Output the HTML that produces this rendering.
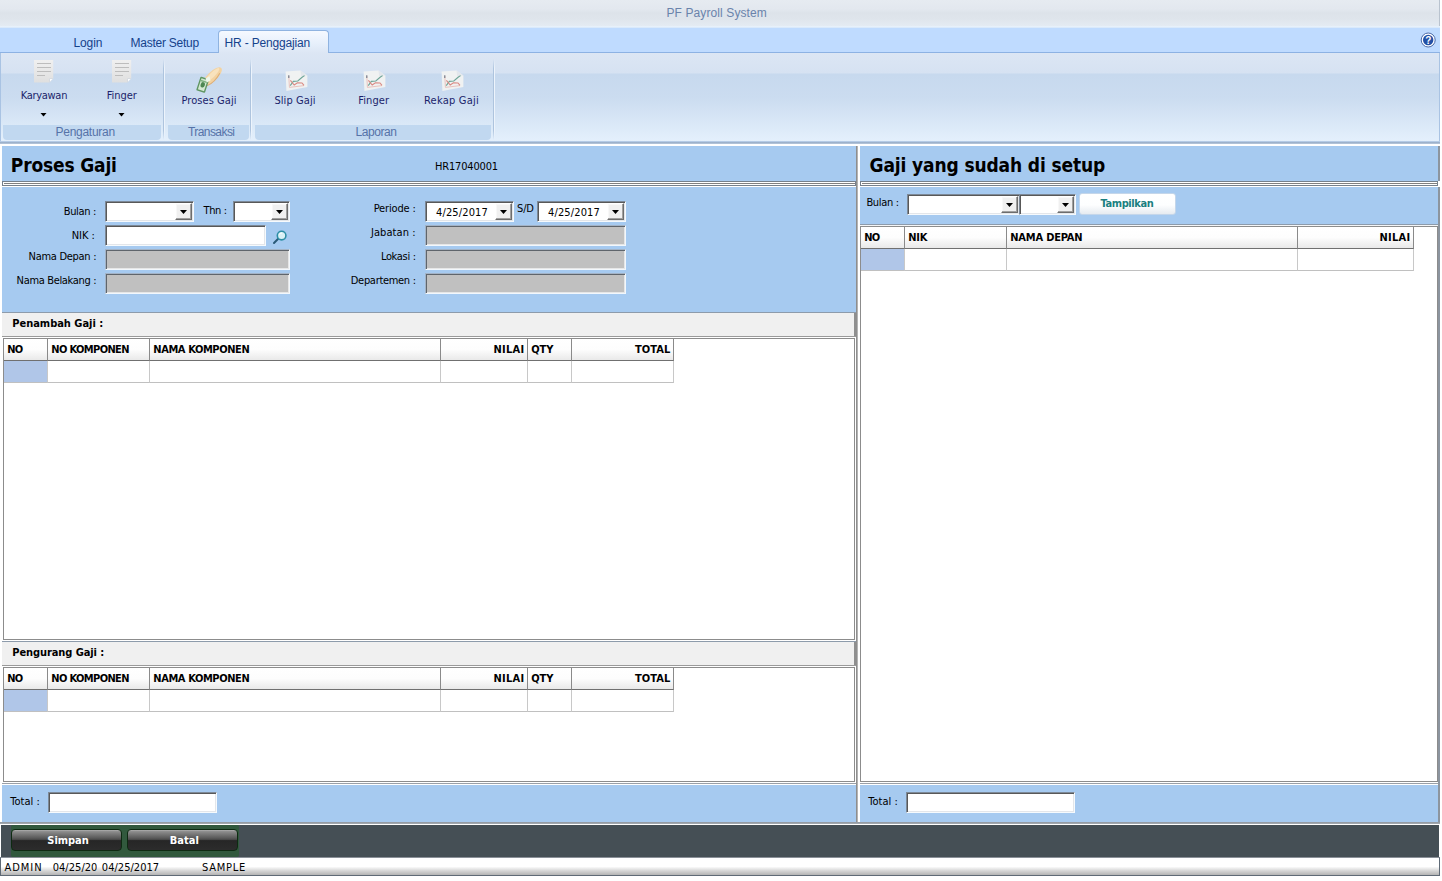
<!DOCTYPE html>
<html lang="id">
<head>
<meta charset="utf-8">
<title>PF Payroll System</title>
<style>
*{box-sizing:border-box;margin:0;padding:0}
html,body{width:1442px;height:881px;overflow:hidden;background:#fff}
body{position:relative;font-family:"Liberation Sans","DejaVu Sans",sans-serif;font-size:11px;color:#000}
#app{position:absolute;left:0;top:0;width:1442px;height:881px;overflow:hidden}
#app div,#app span,#app svg{position:absolute}
.t{white-space:nowrap}
.inp{background:#fff;border:1px solid;border-color:#7d8997 #f6fafd #f6fafd #7d8997;box-shadow:inset 1px 1px 0 #585858,inset -1px -1px 0 #e3e6ea}
.dis{background:#c0c0c0;border:1px solid;border-color:#a3b3c6 #f2f7fc #f2f7fc #a3b3c6;box-shadow:inset 1px 1px 0 #5f656c,inset -1px -1px 0 #e6e6e6}
.ddb{background:#f0f0f0;border:1px solid;border-color:#fff #6d6d6d #6d6d6d #fff;box-shadow:inset -1px -1px 0 #a0a0a0,inset 1px 1px 0 #f8f8f8}
.ddb i{position:absolute;left:4px;top:6px;width:7px;height:4px;background:#000;clip-path:polygon(0 0,100% 0,50% 100%)}
.gh{background:linear-gradient(#fff 0,#fdfdfd 50%,#e9e9e9 100%);border-right:1px solid #8a8a8a;border-bottom:1px solid #707070}
.gc{background:#fff;border-right:1px solid #c8c8c8;border-bottom:1px solid #c0c0c0}
.btn{border-radius:4px;border:1px solid #0e2a12;background:linear-gradient(#b0b0b0 0,#8c8c8c 8%,#5a5a5a 40%,#484848 48%,#262626 53%,#2c2c2c 100%)}
</style>
</head>
<body>
<div id="app">
<div style="left:0px;top:0px;width:1440px;height:26px;background:linear-gradient(#e6ebf1 0,#e3e8ef 9px,#dde3ea 13px,#dfe5ec 19px,#e4ebf3 26px)"></div>
<div style="left:0px;top:26px;width:1440px;height:2px;background:linear-gradient(#edf4fb,#d4e6fb)"></div>
<div style="left:1439px;top:0px;width:1px;height:26px;background:#b9c3cf"></div>
<div style="left:0px;top:28px;width:1440px;height:24px;background:#bfdbff"></div>
<div style="left:0px;top:52px;width:1440px;height:1px;background:#8db2e3"></div>
<div style="left:0px;top:53px;width:1440px;height:89px;background:linear-gradient(#dce6f4 0,#d6e2f2 20px,#c7d9ee 21px,#cbdcf0 45px,#e4f0fc 88px)"></div>
<div style="left:0px;top:53px;width:1px;height:89px;background:#a9c3e3"></div>
<div style="left:1439px;top:53px;width:1px;height:89px;background:#a9c3e3"></div>
<div style="left:0px;top:141px;width:1440px;height:1px;background:#b5cbe6"></div>
<div style="left:0px;top:142px;width:1440px;height:2px;background:linear-gradient(#93aac6,#b9c9dc)"></div>
<div style="left:218px;top:30px;width:111px;height:23px;border:1px solid #8fb3e0;border-bottom:none;border-radius:4px 4px 0 0;background:linear-gradient(#f5f9ff 0,#e6effb 60%,#dce6f4 100%)"></div>
<svg style="left:1420px;top:32px" width="16" height="16" viewBox="0 0 16 16"><circle cx="8.2" cy="8" r="7" fill="#fff" stroke="#4a6aa8" stroke-width="1"/><circle cx="8.2" cy="8" r="5.2" fill="#2350a5"/><text x="8.2" y="11.6" text-anchor="middle" font-family="Liberation Sans,sans-serif" font-weight="bold" font-size="10" fill="#fff">?</text></svg>
<div style="left:3px;top:125px;width:158px;height:15px;background:#c1d8f0;border-radius:0 0 4px 4px"></div>
<div style="left:163px;top:59px;width:1px;height:81px;background:linear-gradient(rgba(160,186,216,0) 0,#aec4de 12%,#aec4de 88%,rgba(160,186,216,0) 100%)"></div>
<div style="left:164px;top:59px;width:1px;height:81px;background:linear-gradient(rgba(255,255,255,0) 0,#edf4fc 12%,#edf4fc 88%,rgba(255,255,255,0) 100%)"></div>
<div style="left:168px;top:125px;width:81px;height:15px;background:#c1d8f0;border-radius:0 0 4px 4px"></div>
<div style="left:250px;top:59px;width:1px;height:81px;background:linear-gradient(rgba(160,186,216,0) 0,#aec4de 12%,#aec4de 88%,rgba(160,186,216,0) 100%)"></div>
<div style="left:251px;top:59px;width:1px;height:81px;background:linear-gradient(rgba(255,255,255,0) 0,#edf4fc 12%,#edf4fc 88%,rgba(255,255,255,0) 100%)"></div>
<div style="left:255px;top:125px;width:236px;height:15px;background:#c1d8f0;border-radius:0 0 4px 4px"></div>
<div style="left:493px;top:59px;width:1px;height:81px;background:linear-gradient(rgba(160,186,216,0) 0,#aec4de 12%,#aec4de 88%,rgba(160,186,216,0) 100%)"></div>
<div style="left:494px;top:59px;width:1px;height:81px;background:linear-gradient(rgba(255,255,255,0) 0,#edf4fc 12%,#edf4fc 88%,rgba(255,255,255,0) 100%)"></div>
<svg style="left:34px;top:60px" width="20" height="23" viewBox="0 0 20 23"><defs><linearGradient id="pg34" x1="0" y1="0" x2="0" y2="1"><stop offset="0" stop-color="#f0f0f0"/><stop offset="1" stop-color="#dfdfdf"/></linearGradient></defs><path d="M0 0H19.2V18.5L15.5 22.6H0Z" fill="url(#pg34)"/><path d="M15.5 22.6V18.5H19.2Z" fill="#c9d3e0"/><path d="M16 19H18.6L16 21.8Z" fill="#fbfcfd"/><g fill="#bdbdbd" shape-rendering="crispEdges"><rect x="3" y="3" width="14" height="1"/><rect x="3" y="7" width="14" height="1"/><rect x="3" y="11" width="14" height="1"/><rect x="3" y="15" width="8" height="1"/></g></svg>
<svg style="left:112px;top:60px" width="20" height="23" viewBox="0 0 20 23"><defs><linearGradient id="pg112" x1="0" y1="0" x2="0" y2="1"><stop offset="0" stop-color="#f0f0f0"/><stop offset="1" stop-color="#dfdfdf"/></linearGradient></defs><path d="M0 0H19.2V18.5L15.5 22.6H0Z" fill="url(#pg112)"/><path d="M15.5 22.6V18.5H19.2Z" fill="#c9d3e0"/><path d="M16 19H18.6L16 21.8Z" fill="#fbfcfd"/><g fill="#bdbdbd" shape-rendering="crispEdges"><rect x="3" y="3" width="14" height="1"/><rect x="3" y="7" width="14" height="1"/><rect x="3" y="11" width="14" height="1"/><rect x="3" y="15" width="8" height="1"/></g></svg>
<svg style="left:40px;top:113px" width="7" height="4" viewBox="0 0 7 4"><path d="M0.5 0H6.5L3.5 3.6Z" fill="#000"/></svg>
<svg style="left:118px;top:113px" width="7" height="4" viewBox="0 0 7 4"><path d="M0.5 0H6.5L3.5 3.6Z" fill="#000"/></svg>
<svg style="left:196px;top:66px" width="27" height="27" viewBox="0 0 27 27"><g transform="rotate(-44 16.3 10.6)"><ellipse cx="16.3" cy="10.6" rx="12.4" ry="4.7" fill="#f3d2a0"/><ellipse cx="17.5" cy="9.4" rx="9.5" ry="2.4" fill="#f8e2bd"/><path d="M6 13.6 Q14 16.6 24 13.4" stroke="#dcae78" stroke-width="1" fill="none"/></g><g transform="rotate(18 6.8 18.6)"><rect x="2.2" y="11.6" width="9.2" height="14.4" rx="1" fill="#5f9662"/><rect x="3.6" y="13" width="6.4" height="11.6" fill="#d4e8d2"/><ellipse cx="6.8" cy="18.8" rx="2.1" ry="2.8" fill="#4d8752"/><rect x="3.6" y="14.6" width="6.4" height="1.4" fill="#7eb07f"/></g><path d="M9.5 12.5 L13.5 10.2 L14.5 14.5 L11 16.5Z" fill="#eef6ea"/></svg>
<svg style="left:285px;top:69.5px" width="24" height="22" viewBox="0 0 24 22"><path d="M0.6 1.6 L15.4 0.6 L22.4 5.6 L22.4 17 L1.4 21 Z" fill="#f0f2f2"/><path d="M15.4 0.6 L22.4 5.6 L16.2 6.2Z" fill="#e3e7ec"/><path d="M3.8 5.8 L4.4 17.4 L19 15.6" fill="none" stroke="#e9bdb8" stroke-width="0.9"/><path d="M3.8 5.2 V8" stroke="#6b7786" stroke-width="1.1"/><path d="M5.2 15.6 L8.4 11.4 L12.8 11 L17.4 7 L19.6 5.6" fill="none" stroke="#6ea597" stroke-width="1.1"/><path d="M5.4 10.4 L9.2 15 L12.4 12.8 L17 13 L19 15.4" fill="none" stroke="#d98982" stroke-width="1.1"/></svg>
<svg style="left:363px;top:69.5px" width="24" height="22" viewBox="0 0 24 22"><path d="M0.6 1.6 L15.4 0.6 L22.4 5.6 L22.4 17 L1.4 21 Z" fill="#f0f2f2"/><path d="M15.4 0.6 L22.4 5.6 L16.2 6.2Z" fill="#e3e7ec"/><path d="M3.8 5.8 L4.4 17.4 L19 15.6" fill="none" stroke="#e9bdb8" stroke-width="0.9"/><path d="M3.8 5.2 V8" stroke="#6b7786" stroke-width="1.1"/><path d="M5.2 15.6 L8.4 11.4 L12.8 11 L17.4 7 L19.6 5.6" fill="none" stroke="#6ea597" stroke-width="1.1"/><path d="M5.4 10.4 L9.2 15 L12.4 12.8 L17 13 L19 15.4" fill="none" stroke="#d98982" stroke-width="1.1"/></svg>
<svg style="left:441px;top:69.5px" width="24" height="22" viewBox="0 0 24 22"><path d="M0.6 1.6 L15.4 0.6 L22.4 5.6 L22.4 17 L1.4 21 Z" fill="#f0f2f2"/><path d="M15.4 0.6 L22.4 5.6 L16.2 6.2Z" fill="#e3e7ec"/><path d="M3.8 5.8 L4.4 17.4 L19 15.6" fill="none" stroke="#e9bdb8" stroke-width="0.9"/><path d="M3.8 5.2 V8" stroke="#6b7786" stroke-width="1.1"/><path d="M5.2 15.6 L8.4 11.4 L12.8 11 L17.4 7 L19.6 5.6" fill="none" stroke="#6ea597" stroke-width="1.1"/><path d="M5.4 10.4 L9.2 15 L12.4 12.8 L17 13 L19 15.4" fill="none" stroke="#d98982" stroke-width="1.1"/></svg>
<div style="left:0px;top:144px;width:1440px;height:2px;background:#fff"></div>
<div style="left:2px;top:146px;width:854px;height:35px;background:#a6caf0"></div>
<div style="left:2px;top:181px;width:854px;height:6px;background:#fff"></div>
<div style="left:2px;top:181px;width:854px;height:5px;border:1px solid #75808c"></div>
<div style="left:4px;top:183px;width:851px;height:1px;background:#808080"></div>
<div style="left:2px;top:187px;width:854px;height:125px;background:#a6caf0"></div>
<div class="inp" style="left:105px;top:201px;width:89px;height:21px;"><div class="ddb" style="right:1px;top:1px;width:17px;height:17px"><i></i></div></div>
<div class="inp" style="left:233px;top:201px;width:57px;height:21px;"><div class="ddb" style="right:1px;top:1px;width:17px;height:17px"><i></i></div></div>
<div class="inp" style="left:105px;top:225px;width:161px;height:21px;"></div>
<div class="dis" style="left:105px;top:249px;width:185px;height:21px;"></div>
<div class="dis" style="left:105px;top:273px;width:185px;height:21px;"></div>
<div class="inp" style="left:425px;top:201px;width:89px;height:21px;"><div class="ddb" style="right:1px;top:1px;width:17px;height:17px"><i></i></div></div>
<div class="inp" style="left:537px;top:201px;width:89px;height:21px;"><div class="ddb" style="right:1px;top:1px;width:17px;height:17px"><i></i></div></div>
<div class="dis" style="left:425px;top:225px;width:201px;height:21px;"></div>
<div class="dis" style="left:425px;top:249px;width:201px;height:21px;"></div>
<div class="dis" style="left:425px;top:273px;width:201px;height:21px;"></div>
<svg style="left:272px;top:230px" width="16" height="15" viewBox="0 0 16 15"><path d="M2 13 L6.2 8.8" stroke="#2a5a78" stroke-width="2" stroke-linecap="round"/><circle cx="9.6" cy="5.6" r="4.3" fill="#d9f1f6" stroke="#2e8fa6" stroke-width="1.6"/><path d="M7.3 4.6 A2.6 2.6 0 0 1 10.2 3" stroke="#fff" stroke-width="1" fill="none"/></svg>
<div style="left:2px;top:312px;width:854px;height:1px;background:#8d9bab"></div>
<div style="left:2px;top:313px;width:854px;height:23px;background:#f0f0f0"></div>
<div style="left:2px;top:336px;width:854px;height:1px;background:#9a9a9a"></div>
<div style="left:2px;top:337px;width:854px;height:303px;background:#fff"></div>
<div style="left:854px;top:313px;width:2px;height:23px;background:#8f8f8f"></div>
<div style="left:3px;top:338px;width:852px;height:302px;background:#fff;border:1px solid #8c8c8c"></div>
<div class="gh" style="left:4px;top:339px;width:44px;height:22px;"></div>
<div class="gc" style="left:4px;top:361px;width:44px;height:22px;background:#b0c6e8;"></div>
<div class="gh" style="left:48px;top:339px;width:102px;height:22px;"></div>
<div class="gc" style="left:48px;top:361px;width:102px;height:22px;"></div>
<div class="gh" style="left:150px;top:339px;width:291px;height:22px;"></div>
<div class="gc" style="left:150px;top:361px;width:291px;height:22px;"></div>
<div class="gh" style="left:441px;top:339px;width:87px;height:22px;"></div>
<div class="gc" style="left:441px;top:361px;width:87px;height:22px;"></div>
<div class="gh" style="left:528px;top:339px;width:44px;height:22px;"></div>
<div class="gc" style="left:528px;top:361px;width:44px;height:22px;"></div>
<div class="gh" style="left:572px;top:339px;width:102px;height:22px;"></div>
<div class="gc" style="left:572px;top:361px;width:102px;height:22px;"></div>
<div style="left:2px;top:640px;width:854px;height:1px;background:#fff"></div>
<div style="left:2px;top:641px;width:854px;height:1px;background:#8d9bab"></div>
<div style="left:2px;top:642px;width:854px;height:23px;background:#f0f0f0"></div>
<div style="left:2px;top:665px;width:854px;height:1px;background:#9a9a9a"></div>
<div style="left:2px;top:666px;width:854px;height:116px;background:#fff"></div>
<div style="left:854px;top:642px;width:2px;height:23px;background:#8f8f8f"></div>
<div style="left:3px;top:667px;width:852px;height:115px;background:#fff;border:1px solid #8c8c8c"></div>
<div class="gh" style="left:4px;top:668px;width:44px;height:22px;"></div>
<div class="gc" style="left:4px;top:690px;width:44px;height:22px;background:#b0c6e8;"></div>
<div class="gh" style="left:48px;top:668px;width:102px;height:22px;"></div>
<div class="gc" style="left:48px;top:690px;width:102px;height:22px;"></div>
<div class="gh" style="left:150px;top:668px;width:291px;height:22px;"></div>
<div class="gc" style="left:150px;top:690px;width:291px;height:22px;"></div>
<div class="gh" style="left:441px;top:668px;width:87px;height:22px;"></div>
<div class="gc" style="left:441px;top:690px;width:87px;height:22px;"></div>
<div class="gh" style="left:528px;top:668px;width:44px;height:22px;"></div>
<div class="gc" style="left:528px;top:690px;width:44px;height:22px;"></div>
<div class="gh" style="left:572px;top:668px;width:102px;height:22px;"></div>
<div class="gc" style="left:572px;top:690px;width:102px;height:22px;"></div>
<div style="left:2px;top:782px;width:854px;height:3px;background:#fff"></div>
<div style="left:2px;top:783px;width:854px;height:1px;background:#9aa0a8"></div>
<div style="left:2px;top:785px;width:854px;height:37px;background:#a6caf0"></div>
<div class="inp" style="left:48px;top:792px;width:169px;height:21px;"></div>
<div style="left:856px;top:146px;width:4px;height:676px;background:#fff;border-left:1px solid #8e8e8e"></div>
<div style="left:857px;top:146px;width:1px;height:676px;background:#b4b4b4"></div>
<div style="left:860px;top:146px;width:578px;height:35px;background:#a6caf0"></div>
<div style="left:860px;top:181px;width:578px;height:6px;background:#fff"></div>
<div style="left:860px;top:181px;width:578px;height:5px;border:1px solid #75808c"></div>
<div style="left:862px;top:183px;width:575px;height:1px;background:#808080"></div>
<div style="left:860px;top:187px;width:578px;height:37px;background:#a6caf0"></div>
<div style="left:860px;top:224px;width:578px;height:1px;background:#8d9bab"></div>
<div style="left:860px;top:225px;width:578px;height:1px;background:#f4f6f8"></div>
<div class="inp" style="left:907px;top:194px;width:113px;height:21px;"><div class="ddb" style="right:1px;top:1px;width:17px;height:17px"><i></i></div></div>
<div class="inp" style="left:1019px;top:194px;width:57px;height:21px;"><div class="ddb" style="right:1px;top:1px;width:17px;height:17px"><i></i></div></div>
<div style="left:1079px;top:193px;width:97px;height:22px;border-radius:3px;border:1px solid #c4d6ea;background:linear-gradient(#ffffff 0,#fdfeff 55%,#e6ebf0 100%)"></div>
<div style="left:860px;top:226px;width:578px;height:556px;background:#fff;border:1px solid #8c8c8c"></div>
<div style="left:1438px;top:146px;width:2px;height:35px;background:#8c959f"></div>
<div style="left:1438px;top:187px;width:2px;height:635px;background:#8c959f"></div>
<div class="gh" style="left:861px;top:227px;width:44px;height:22px;"></div>
<div class="gc" style="left:861px;top:249px;width:44px;height:22px;background:#b0c6e8;"></div>
<div class="gh" style="left:905px;top:227px;width:102px;height:22px;"></div>
<div class="gc" style="left:905px;top:249px;width:102px;height:22px;"></div>
<div class="gh" style="left:1007px;top:227px;width:291px;height:22px;"></div>
<div class="gc" style="left:1007px;top:249px;width:291px;height:22px;"></div>
<div class="gh" style="left:1298px;top:227px;width:116px;height:22px;"></div>
<div class="gc" style="left:1298px;top:249px;width:116px;height:22px;"></div>
<div style="left:860px;top:782px;width:578px;height:3px;background:#fff"></div>
<div style="left:860px;top:783px;width:578px;height:1px;background:#9aa0a8"></div>
<div style="left:860px;top:785px;width:578px;height:37px;background:#a6caf0"></div>
<div class="inp" style="left:906px;top:792px;width:169px;height:21px;"></div>
<div style="left:0px;top:822px;width:1440px;height:2px;background:linear-gradient(#8f979f,#a8aeb4)"></div>
<div style="left:0px;top:824px;width:1440px;height:1px;background:#fff"></div>
<div style="left:1px;top:825px;width:1438px;height:32px;background:#454f55"></div>
<div style="left:11px;top:825px;width:228px;height:32px;background:#31593d;border-radius:2px"></div>
<div class="btn" style="left:11px;top:829px;width:111px;height:22px;"></div>
<div class="btn" style="left:127px;top:829px;width:111px;height:22px;"></div>
<div style="left:0px;top:857px;width:1440px;height:19px;background:linear-gradient(#fff 0,#fff 50%,#d6d6d6 75%,#b4b4b4 100%);border:1px solid #5f6a76;border-top-color:#8a9098"></div>
<span class="t" style="top:5px;font-size:12px;line-height:16px;height:16px;color:#6a83ab;font-family:'Liberation Sans','DejaVu Sans',sans-serif;letter-spacing:0.100px;left:666.5px;">PF Payroll System</span>
<span class="t" style="top:35px;font-size:12px;line-height:16px;height:16px;color:#15428b;font-family:'Liberation Sans','DejaVu Sans',sans-serif;letter-spacing:-0.115px;left:73.5px;">Login</span>
<span class="t" style="top:35px;font-size:12px;line-height:16px;height:16px;color:#15428b;font-family:'Liberation Sans','DejaVu Sans',sans-serif;letter-spacing:-0.240px;left:130.5px;">Master Setup</span>
<span class="t" style="top:35px;font-size:12px;line-height:16px;height:16px;color:#15428b;font-family:'Liberation Sans','DejaVu Sans',sans-serif;letter-spacing:-0.171px;left:224.5px;">HR - Penggajian</span>
<span class="t" style="top:124px;font-size:12px;line-height:16px;height:16px;color:#5673a8;font-family:'Liberation Sans','DejaVu Sans',sans-serif;letter-spacing:-0.266px;left:55.5px;">Pengaturan</span>
<span class="t" style="top:124px;font-size:12px;line-height:16px;height:16px;color:#5673a8;font-family:'Liberation Sans','DejaVu Sans',sans-serif;letter-spacing:-0.575px;left:188px;">Transaksi</span>
<span class="t" style="top:124px;font-size:12px;line-height:16px;height:16px;color:#5673a8;font-family:'Liberation Sans','DejaVu Sans',sans-serif;letter-spacing:-0.421px;left:355.4px;">Laporan</span>
<span class="t" style="top:88px;font-size:11px;line-height:16px;height:16px;color:#1b1f6b;font-family:'DejaVu Sans Condensed','Liberation Sans',sans-serif;letter-spacing:-0.310px;left:20.8px;">Karyawan</span>
<span class="t" style="top:88px;font-size:11px;line-height:16px;height:16px;color:#1b1f6b;font-family:'DejaVu Sans Condensed','Liberation Sans',sans-serif;letter-spacing:-0.027px;left:106.7px;">Finger</span>
<span class="t" style="top:93px;font-size:11px;line-height:16px;height:16px;color:#1b1f6b;font-family:'DejaVu Sans Condensed','Liberation Sans',sans-serif;letter-spacing:0.051px;left:181.5px;">Proses Gaji</span>
<span class="t" style="top:93px;font-size:11px;line-height:16px;height:16px;color:#1b1f6b;font-family:'DejaVu Sans Condensed','Liberation Sans',sans-serif;letter-spacing:0.083px;left:274.4px;">Slip Gaji</span>
<span class="t" style="top:93px;font-size:11px;line-height:16px;height:16px;color:#1b1f6b;font-family:'DejaVu Sans Condensed','Liberation Sans',sans-serif;letter-spacing:0.107px;left:358.2px;">Finger</span>
<span class="t" style="top:93px;font-size:11px;line-height:16px;height:16px;color:#1b1f6b;font-family:'DejaVu Sans Condensed','Liberation Sans',sans-serif;letter-spacing:0.227px;left:424px;">Rekap Gaji</span>
<span class="t" style="top:157px;font-size:19px;line-height:16px;height:16px;color:#000;font-family:'DejaVu Sans Condensed','DejaVu Sans','Liberation Sans',sans-serif;font-weight:700;letter-spacing:-0.170px;left:10.8px;">Proses Gaji</span>
<span class="t" style="top:159px;font-size:11px;line-height:16px;height:16px;color:#000;font-family:'DejaVu Sans Condensed','Liberation Sans',sans-serif;letter-spacing:-0.169px;left:435px;">HR17040001</span>
<span class="t" style="top:204px;font-size:11px;line-height:16px;height:16px;color:#000;font-family:'DejaVu Sans Condensed','Liberation Sans',sans-serif;letter-spacing:-0.320px;left:63.70px;">Bulan :</span>
<span class="t" style="top:203px;font-size:11px;line-height:16px;height:16px;color:#000;font-family:'DejaVu Sans Condensed','Liberation Sans',sans-serif;letter-spacing:-0.356px;left:203.5px;">Thn :</span>
<span class="t" style="top:228px;font-size:11px;line-height:16px;height:16px;color:#000;font-family:'DejaVu Sans Condensed','Liberation Sans',sans-serif;letter-spacing:-0.039px;left:71.70px;">NIK :</span>
<span class="t" style="top:249px;font-size:11px;line-height:16px;height:16px;color:#000;font-family:'DejaVu Sans Condensed','Liberation Sans',sans-serif;letter-spacing:-0.294px;left:28.60px;">Nama Depan :</span>
<span class="t" style="top:273px;font-size:11px;line-height:16px;height:16px;color:#000;font-family:'DejaVu Sans Condensed','Liberation Sans',sans-serif;letter-spacing:-0.337px;left:16.60px;">Nama Belakang :</span>
<span class="t" style="top:201px;font-size:11px;line-height:16px;height:16px;color:#000;font-family:'DejaVu Sans Condensed','Liberation Sans',sans-serif;letter-spacing:-0.155px;left:373.70px;">Periode :</span>
<span class="t" style="top:225px;font-size:11px;line-height:16px;height:16px;color:#000;font-family:'DejaVu Sans Condensed','Liberation Sans',sans-serif;letter-spacing:0.085px;left:370.90px;">Jabatan :</span>
<span class="t" style="top:249px;font-size:11px;line-height:16px;height:16px;color:#000;font-family:'DejaVu Sans Condensed','Liberation Sans',sans-serif;letter-spacing:-0.320px;left:380.90px;">Lokasi :</span>
<span class="t" style="top:273px;font-size:11px;line-height:16px;height:16px;color:#000;font-family:'DejaVu Sans Condensed','Liberation Sans',sans-serif;letter-spacing:-0.307px;left:350.80px;">Departemen :</span>
<span class="t" style="top:205px;font-size:11px;line-height:16px;height:16px;color:#000;font-family:'DejaVu Sans Condensed','Liberation Sans',sans-serif;letter-spacing:0.139px;left:436px;">4/25/2017</span>
<span class="t" style="top:201px;font-size:11px;line-height:16px;height:16px;color:#000;font-family:'DejaVu Sans Condensed','Liberation Sans',sans-serif;letter-spacing:-0.150px;left:517px;">S/D</span>
<span class="t" style="top:205px;font-size:11px;line-height:16px;height:16px;color:#000;font-family:'DejaVu Sans Condensed','Liberation Sans',sans-serif;letter-spacing:0.139px;left:548px;">4/25/2017</span>
<span class="t" style="top:316px;font-size:11px;line-height:16px;height:16px;color:#000;font-family:'DejaVu Sans Condensed','Liberation Sans',sans-serif;font-weight:700;letter-spacing:-0.029px;left:12.3px;">Penambah Gaji :</span>
<span class="t" style="top:342px;font-size:11px;line-height:16px;height:16px;color:#000;font-family:'DejaVu Sans Condensed','Liberation Sans',sans-serif;font-weight:700;letter-spacing:-0.900px;left:7.3px;">NO</span>
<span class="t" style="top:342px;font-size:11px;line-height:16px;height:16px;color:#000;font-family:'DejaVu Sans Condensed','Liberation Sans',sans-serif;font-weight:700;letter-spacing:-0.633px;left:51.3px;">NO KOMPONEN</span>
<span class="t" style="top:342px;font-size:11px;line-height:16px;height:16px;color:#000;font-family:'DejaVu Sans Condensed','Liberation Sans',sans-serif;font-weight:700;letter-spacing:-0.410px;left:153.3px;">NAMA KOMPONEN</span>
<span class="t" style="top:342px;font-size:11px;line-height:16px;height:16px;color:#000;font-family:'DejaVu Sans Condensed','Liberation Sans',sans-serif;font-weight:700;letter-spacing:0.278px;left:493.50px;">NILAI</span>
<span class="t" style="top:342px;font-size:11px;line-height:16px;height:16px;color:#000;font-family:'DejaVu Sans Condensed','Liberation Sans',sans-serif;font-weight:700;letter-spacing:-0.109px;left:531.3px;">QTY</span>
<span class="t" style="top:342px;font-size:11px;line-height:16px;height:16px;color:#000;font-family:'DejaVu Sans Condensed','Liberation Sans',sans-serif;font-weight:700;letter-spacing:0.094px;left:635.00px;">TOTAL</span>
<span class="t" style="top:645px;font-size:11px;line-height:16px;height:16px;color:#000;font-family:'DejaVu Sans Condensed','Liberation Sans',sans-serif;font-weight:700;letter-spacing:-0.092px;left:12.3px;">Pengurang Gaji :</span>
<span class="t" style="top:671px;font-size:11px;line-height:16px;height:16px;color:#000;font-family:'DejaVu Sans Condensed','Liberation Sans',sans-serif;font-weight:700;letter-spacing:-0.900px;left:7.3px;">NO</span>
<span class="t" style="top:671px;font-size:11px;line-height:16px;height:16px;color:#000;font-family:'DejaVu Sans Condensed','Liberation Sans',sans-serif;font-weight:700;letter-spacing:-0.633px;left:51.3px;">NO KOMPONEN</span>
<span class="t" style="top:671px;font-size:11px;line-height:16px;height:16px;color:#000;font-family:'DejaVu Sans Condensed','Liberation Sans',sans-serif;font-weight:700;letter-spacing:-0.410px;left:153.3px;">NAMA KOMPONEN</span>
<span class="t" style="top:671px;font-size:11px;line-height:16px;height:16px;color:#000;font-family:'DejaVu Sans Condensed','Liberation Sans',sans-serif;font-weight:700;letter-spacing:0.278px;left:493.50px;">NILAI</span>
<span class="t" style="top:671px;font-size:11px;line-height:16px;height:16px;color:#000;font-family:'DejaVu Sans Condensed','Liberation Sans',sans-serif;font-weight:700;letter-spacing:-0.109px;left:531.3px;">QTY</span>
<span class="t" style="top:671px;font-size:11px;line-height:16px;height:16px;color:#000;font-family:'DejaVu Sans Condensed','Liberation Sans',sans-serif;font-weight:700;letter-spacing:0.094px;left:635.00px;">TOTAL</span>
<span class="t" style="top:794px;font-size:11px;line-height:16px;height:16px;color:#000;font-family:'DejaVu Sans Condensed','Liberation Sans',sans-serif;letter-spacing:0.028px;left:10.2px;">Total :</span>
<span class="t" style="top:157px;font-size:19px;line-height:16px;height:16px;color:#000;font-family:'DejaVu Sans Condensed','DejaVu Sans','Liberation Sans',sans-serif;font-weight:700;letter-spacing:-0.141px;left:869.6px;">Gaji yang sudah di setup</span>
<span class="t" style="top:195px;font-size:11px;line-height:16px;height:16px;color:#000;font-family:'DejaVu Sans Condensed','Liberation Sans',sans-serif;letter-spacing:-0.306px;left:866.4px;">Bulan :</span>
<span class="t" style="top:196px;font-size:11px;line-height:16px;height:16px;color:#1b7f7f;font-family:'DejaVu Sans Condensed','Liberation Sans',sans-serif;font-weight:700;letter-spacing:-0.389px;left:1100.5px;">Tampilkan</span>
<span class="t" style="top:230px;font-size:11px;line-height:16px;height:16px;color:#000;font-family:'DejaVu Sans Condensed','Liberation Sans',sans-serif;font-weight:700;letter-spacing:-0.900px;left:864.3px;">NO</span>
<span class="t" style="top:230px;font-size:11px;line-height:16px;height:16px;color:#000;font-family:'DejaVu Sans Condensed','Liberation Sans',sans-serif;font-weight:700;letter-spacing:-0.214px;left:908.3px;">NIK</span>
<span class="t" style="top:230px;font-size:11px;line-height:16px;height:16px;color:#000;font-family:'DejaVu Sans Condensed','Liberation Sans',sans-serif;font-weight:700;letter-spacing:-0.206px;left:1010.3px;">NAMA DEPAN</span>
<span class="t" style="top:230px;font-size:11px;line-height:16px;height:16px;color:#000;font-family:'DejaVu Sans Condensed','Liberation Sans',sans-serif;font-weight:700;letter-spacing:0.278px;left:1379.50px;">NILAI</span>
<span class="t" style="top:794px;font-size:11px;line-height:16px;height:16px;color:#000;font-family:'DejaVu Sans Condensed','Liberation Sans',sans-serif;letter-spacing:0.028px;left:868.2px;">Total :</span>
<span class="t" style="top:833px;font-size:11px;line-height:16px;height:16px;color:#fff;font-family:'DejaVu Sans Condensed','Liberation Sans',sans-serif;font-weight:700;letter-spacing:-0.023px;left:47.3px;">Simpan</span>
<span class="t" style="top:833px;font-size:11px;line-height:16px;height:16px;color:#fff;font-family:'DejaVu Sans Condensed','Liberation Sans',sans-serif;font-weight:700;letter-spacing:0.077px;left:169.7px;">Batal</span>
<span class="t" style="top:860px;font-size:11px;line-height:16px;height:16px;color:#000;font-family:'DejaVu Sans Condensed','Liberation Sans',sans-serif;letter-spacing:0.950px;left:4.5px;">ADMIN</span>
<span class="t" style="top:860px;font-size:11px;line-height:16px;height:16px;color:#000;font-family:'DejaVu Sans Condensed','Liberation Sans',sans-serif;letter-spacing:0.037px;left:52.7px;clip-path:inset(0 13.2px 0 0);">04/25/2017</span>
<span class="t" style="top:860px;font-size:11px;line-height:16px;height:16px;color:#000;font-family:'DejaVu Sans Condensed','Liberation Sans',sans-serif;letter-spacing:0.037px;left:101.8px;">04/25/2017</span>
<span class="t" style="top:860px;font-size:11px;line-height:16px;height:16px;color:#000;font-family:'DejaVu Sans Condensed','Liberation Sans',sans-serif;letter-spacing:0.745px;left:202px;">SAMPLE</span>
</div>
</body>
</html>
